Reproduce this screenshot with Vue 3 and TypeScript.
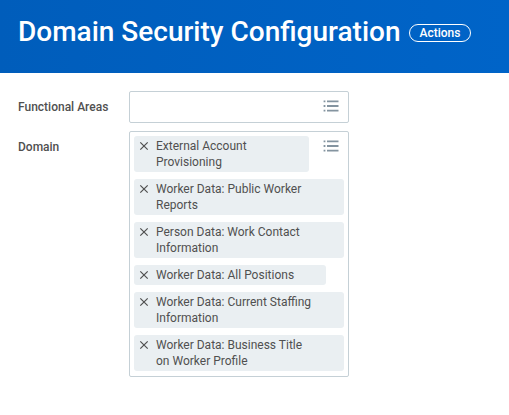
<script setup lang="ts">
import { ref } from 'vue'

interface Domain {
  id: number
  name: string
}

const functionalArea = ref('')
const domains = ref<Domain[]>([
  { id: 1, name: 'External Account Provisioning' },
  { id: 2, name: 'Worker Data: Public Worker Reports' },
  { id: 3, name: 'Person Data: Work Contact Information' },
  { id: 4, name: 'Worker Data: All Positions' },
  { id: 5, name: 'Worker Data: Current Staffing Information' },
  { id: 6, name: 'Worker Data: Business Title on Worker Profile' },
])

function removeDomain(id: number): void {
  domains.value = domains.value.filter((domain) => domain.id !== id)
}
</script>

<template>
  <div class="page">
    <header class="banner">
      <h1 class="title">Domain Security Configuration</h1>
      <button type="button" class="actions">Actions</button>
    </header>

    <main class="form">
      <label class="label" for="functional-areas">Functional Areas</label>
      <div class="field">
        <input id="functional-areas" v-model="functionalArea" class="entry" type="text" />
        <button type="button" class="prompt" aria-label="Browse functional areas">
          <svg width="16" height="14" viewBox="0 0 16 14" aria-hidden="true">
            <path d="M4 2.4H15.5M4 7H15.5M4 11.6H15.5" />
            <path d="M.6 2.4H2.4M.6 7H2.4M.6 11.6H2.4" />
          </svg>
        </button>
      </div>

      <span id="domain-label" class="label">Domain</span>
      <div class="field" role="group" aria-labelledby="domain-label">
        <ul class="tags">
          <li v-for="domain in domains" :key="domain.id" class="tag">
            <button
              type="button"
              class="remove"
              :aria-label="`Remove ${domain.name}`"
              @click="removeDomain(domain.id)"
            >
              <svg width="10" height="10" viewBox="0 0 10 10" aria-hidden="true">
                <path d="M1.3 1.3L8.7 8.7M8.7 1.3L1.3 8.7" />
              </svg>
            </button>
            <span class="name">{{ domain.name }}</span>
          </li>
        </ul>
        <button type="button" class="prompt" aria-label="Browse domains">
          <svg width="16" height="14" viewBox="0 0 16 14" aria-hidden="true">
            <path d="M4 2.4H15.5M4 7H15.5M4 11.6H15.5" />
            <path d="M.6 2.4H2.4M.6 7H2.4M.6 11.6H2.4" />
          </svg>
        </button>
      </div>
    </main>
  </div>
</template>

<style>
body {
  background: #fff;
}
</style>

<style scoped>
.page {
  font-family: Roboto, 'Liberation Sans', sans-serif;
  font-size: 12px;
  line-height: 16px;
  color: #505050;
}

button {
  padding: 0;
  border: 0;
  background: none;
  font: inherit;
  color: inherit;
  cursor: pointer;
}

.banner {
  display: flex;
  align-items: center;
  gap: 8px;
  padding: 14px 18px 23px;
  background: linear-gradient(90deg, #005dbb, #0064c8);
  color: #fff;
}

.title {
  margin: 0;
  font-size: 28px;
  line-height: 36px;
  font-weight: 500;
  white-space: nowrap;
}

.actions {
  margin-top: 2px;
  padding: 0 10px;
  border: 1px solid #fff;
  border-radius: 9px;
  font-weight: 500;
}

.form {
  display: grid;
  grid-template-columns: 103px minmax(0, 220px);
  gap: 8px;
  padding: 18px;
}

.label {
  padding-top: 8px;
  font-weight: 500;
}

.field {
  display: grid;
  grid-template-columns: minmax(0, 1fr) 35px;
  border: 1px solid #c5d0d6;
  border-radius: 2px;
}

.entry {
  min-width: 0;
  height: 30px;
  box-sizing: border-box;
  padding: 0 8px;
  border: 0;
  outline: 0;
  background: transparent;
  font: inherit;
  color: inherit;
}

.prompt {
  display: flex;
  grid-column: 2;
  grid-row: 1;
  align-items: center;
  align-self: start;
  justify-content: center;
  height: 28px;
}

.prompt path {
  fill: none;
  stroke: #8494a0;
  stroke-width: 1.8;
}

.tags {
  display: flex;
  grid-column: 1 / -1;
  grid-row: 1;
  flex-direction: column;
  align-items: flex-start;
  gap: 7px;
  margin: 0;
  padding: 4px 4px 5px;
  list-style: none;
}

.tag {
  display: flex;
  gap: 7px;
  box-sizing: border-box;
  padding: 2px 32px 2px 5px;
  border-radius: 3px;
  background: #eaeff2;
}

.tag:first-child {
  margin-right: 35px;
}

.remove {
  display: flex;
  flex: none;
  align-items: center;
  height: 16px;
}

.remove path {
  fill: none;
  stroke: #505050;
  stroke-width: 1.2;
}
</style>
